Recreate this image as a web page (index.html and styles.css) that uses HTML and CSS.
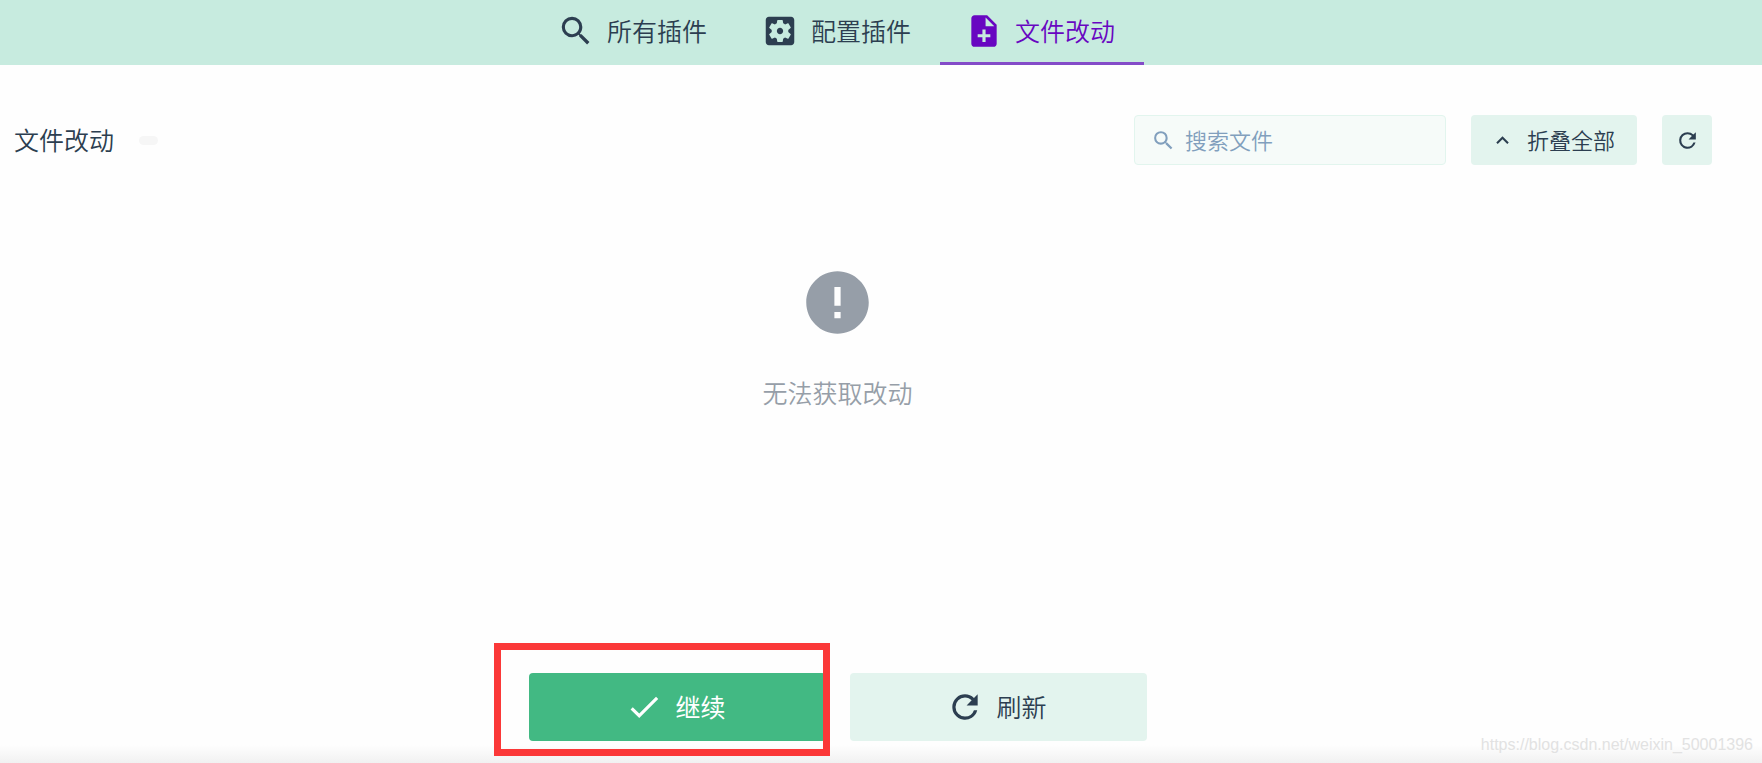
FILE: index.html
```html
<!DOCTYPE html>
<html lang="zh-CN">
<head>
    <meta charset="UTF-8">
    <meta name="viewport" content="width=device-width, initial-scale=1.0">
    <title>文件改动</title>
    <link rel="stylesheet" href="styles.css">
</head>
<body>
    <nav class="tabs">
        <a class="tab" href="#all">
            <svg class="icon" viewBox="0 0 24 24"><path d="M9.5 3A6.5 6.5 0 0 1 16 9.5c0 1.61-.59 3.09-1.56 4.23l.27.27h.79l5 5-1.5 1.5-5-5v-.79l-.27-.27A6.516 6.516 0 0 1 9.5 16a6.5 6.5 0 0 1 0-13m0 2C7 5 5 7 5 9.5S7 14 9.5 14 14 12 14 9.5 12 5 9.5 5z"/></svg>
            <span class="label">所有插件</span>
        </a>
        <a class="tab" href="#config">
            <svg class="icon" viewBox="0 0 24 24"><path d="M12 10c-1.1 0-2 .9-2 2s.9 2 2 2 2-.9 2-2-.9-2-2-2zm7-7H5c-1.11 0-2 .9-2 2v14c0 1.1.89 2 2 2h14c1.11 0 2-.9 2-2V5c0-1.1-.89-2-2-2zm-1.750 9c0 .23-.02.46-.05.68l1.480 1.160c.13.11.17.3.08.45l-1.400 2.420c-.09.15-.27.21-.43.15l-1.740-.7c-.36.28-.76.51-1.180.69l-.26 1.850c-.03.17-.18.3-.35.3h-2.800c-.17 0-.32-.13-.35-.29l-.26-1.850c-.43-.18-.82-.41-1.180-.69l-1.740.7c-.16.06-.34 0-.43-.15l-1.400-2.420c-.09-.15-.05-.34.08-.45l1.480-1.160c-.03-.23-.05-.46-.05-.69 0-.23.02-.46.05-.68l-1.480-1.160c-.13-.11-.17-.3-.08-.45l1.400-2.420c.09-.15.27-.21.43-.15l1.740.7c.36-.28.76-.51 1.180-.69l.26-1.850c.03-.17.18-.3.35-.3h2.800c.17 0 .32.13.35.29l.26 1.850c.43.18.82.41 1.180.69l1.740-.7c.16-.06.34 0 .43.15l1.400 2.420c.09.15.05.34-.08.45l-1.480 1.160c.03.23.05.46.05.69z"/></svg>
            <span class="label">配置插件</span>
        </a>
        <a class="tab active" href="#changes">
            <svg class="icon" viewBox="0 0 24 24"><path d="M14 2H6c-1.1 0-1.99.9-1.99 2L4 20c0 1.1.89 2 1.99 2H18c1.1 0 2-.9 2-2V8l-6-6zm2 14h-3v3h-2v-3H8v-2h3v-3h2v3h3v2zm-3-7V3.5L18.5 9H13z"/></svg>
            <span class="label">文件改动</span>
        </a>
    </nav>

    <div class="toolbar">
        <h1 class="title label">文件改动</h1>
        <span class="badge"></span>
        <label class="search">
            <svg class="icon small" viewBox="0 0 24 24"><path d="M9.5 3A6.5 6.5 0 0 1 16 9.5c0 1.61-.59 3.09-1.56 4.23l.27.27h.79l5 5-1.5 1.5-5-5v-.79l-.27-.27A6.516 6.516 0 0 1 9.5 16a6.5 6.5 0 0 1 0-13m0 2C7 5 5 7 5 9.5S7 14 9.5 14 14 12 14 9.5 12 5 9.5 5z"/></svg>
            <input class="label" type="text" placeholder="搜索文件" aria-label="搜索文件">
        </label>
        <button class="button collapse" type="button">
            <svg class="icon small" viewBox="0 0 24 24"><path d="M7.41 15.41L12 10.83l4.59 4.58L18 14l-6-6-6 6z"/></svg>
            <span class="label">折叠全部</span>
        </button>
        <button class="button icon-button" type="button" aria-label="刷新">
            <svg class="icon small" viewBox="0 0 24 24"><path d="M17.65 6.35A7.958 7.958 0 0 0 12 4a8 8 0 1 0 7.73 10h-2.08A5.99 5.99 0 0 1 12 18a6 6 0 1 1 0-12c1.66 0 3.14.69 4.22 1.78L13 11h7V4l-2.35 2.35z"/></svg>
        </button>
    </div>

    <main class="empty">
        <svg class="empty-icon" viewBox="0 0 24 24"><path d="M12 2C6.48 2 2 6.48 2 12s4.48 10 10 10 10-4.48 10-10S17.52 2 12 2zm1 15h-2v-2h2v2zm0-4h-2V7h2v6z"/></svg>
        <p>无法获取改动</p>
    </main>

    <footer class="actions">
        <div class="highlight">
            <button class="button big primary" type="button">
                <svg class="icon" viewBox="0 0 24 24"><path d="M21 7L9 19l-5.5-5.5 1.41-1.41L9 16.17 19.59 5.59 21 7z"/></svg>
                <span class="label">继续</span>
            </button>
        </div>
        <button class="button big" type="button">
            <svg class="icon" viewBox="0 0 24 24"><path d="M17.65 6.35A7.958 7.958 0 0 0 12 4a8 8 0 1 0 7.73 10h-2.08A5.99 5.99 0 0 1 12 18a6 6 0 1 1 0-12c1.66 0 3.14.69 4.22 1.78L13 11h7V4l-2.35 2.35z"/></svg>
            <span class="label">刷新</span>
        </button>
    </footer>
    <div class="watermark">https://blog.csdn.net/weixin_50001396</div>
</body>
</html>
```

FILE: styles.css
```css
* { box-sizing: border-box; }

body {
    display: flex;
    flex-direction: column;
    min-height: 100vh;
    margin: 0;
    position: relative;
    background: linear-gradient(to top, #f1f1f1, #fefefe 18px);
    color: #2c3e50;
    font-family: "Noto Sans CJK SC", sans-serif;
    font-size: 25px;
    font-weight: 350;
    line-height: 36px;
}

.icon { width: 38px; height: 38px; flex: none; fill: currentColor; }
.icon.small { width: 25px; height: 25px; }
.label { padding: 0 0 3px; }

/* tabs */
.tabs {
    display: flex;
    justify-content: center;
    padding-right: 86px;
    background: #c7ebdf;
}
.tab {
    display: flex;
    align-items: center;
    gap: 12px;
    height: 65px;
    padding: 0 29px 0 25px;
    border-bottom: 3px solid transparent;
    color: #2c3e50;
    text-decoration: none;
}
.tab.active { color: #6806c1; border-color: #844cc8; }

/* toolbar */
.toolbar {
    display: flex;
    align-items: center;
    padding: 50px 50px 0 14px;
    gap: 25px;
}
.title { margin: 0; font-size: 25px; font-weight: 350; }
.badge { width: 19px; height: 9px; border-radius: 5px; background: #f6f6f6; }
.search {
    display: flex;
    align-items: center;
    gap: 9px;
    width: 312px;
    height: 50px;
    margin-left: auto;
    padding: 0 16px;
    border: 1px solid #e2f5ee;
    border-radius: 4px;
    background: #f6fbf9;
    color: #819fbd;
}
.search input {
    flex: 1;
    min-width: 0;
    border: 0;
    outline: 0;
    background: none;
    color: #2c3e50;
    font: inherit;
    font-size: 22px;
}
.search input::placeholder { color: #819fbd; opacity: 1; }

.button {
    display: flex;
    align-items: center;
    justify-content: center;
    gap: 12px;
    height: 50px;
    padding: 0;
    border: 0;
    border-radius: 4px;
    background: #e3f4ee;
    color: #2c3e50;
    font: inherit;
    font-size: 22px;
    cursor: pointer;
}
.collapse { padding: 0 22px 0 19px; }
.icon-button { width: 50px; }

/* empty state */
.empty {
    display: flex;
    flex: 1;
    flex-direction: column;
    align-items: center;
    padding: 100px 87px 0 0;
    color: #969ea8;
}
.empty-icon { width: 75px; height: 75px; fill: currentColor; }
.empty p { margin: 34px 0 0; }

/* bottom buttons */
.actions {
    display: flex;
    justify-content: center;
    gap: 24px;
    padding: 0 86px 22px 0;
}
.button.big { width: 297px; height: 68px; padding-right: 4px; font-size: 25px; }
.button.primary { background: #42b983; color: #fff; font-weight: 400; }

.highlight { position: relative; }
.highlight::after {
    content: "";
    position: absolute;
    inset: -30px -4px -15px -35px;
    border: 7px solid #fb3838;
    pointer-events: none;
}

.watermark {
    position: absolute;
    right: 9px;
    bottom: 9px;
    color: #e2e2e2;
    font: 16px/18px "Liberation Sans", Arial, sans-serif;
}
```
